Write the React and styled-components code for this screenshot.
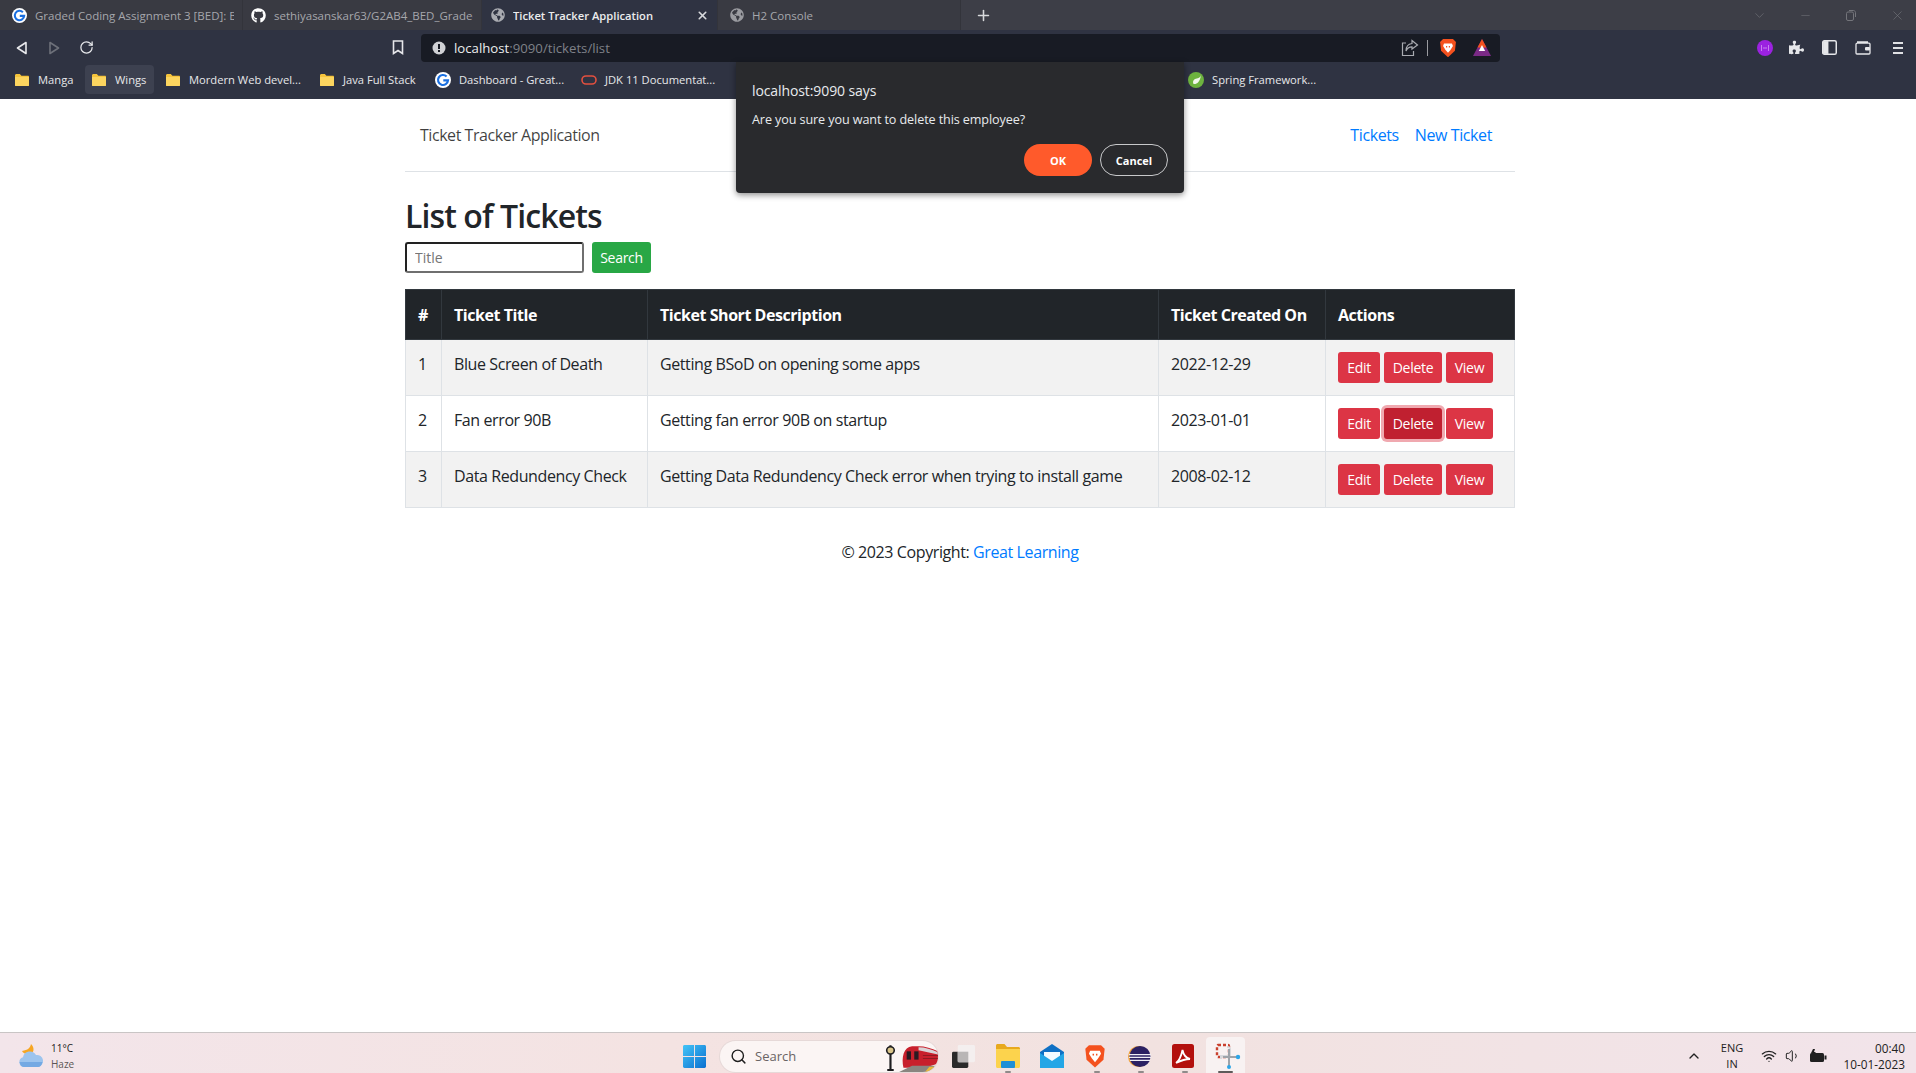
import React from "react"
import styled, { createGlobalStyle } from "styled-components"
import { FaGithub, FaGlobeAmericas, FaPuzzlePiece } from "react-icons/fa"
import { Search as SearchIcon, RotateCw, Plus, X, ChevronDown, ChevronUp, Minus, Wifi, Volume1 } from "lucide-react"

const UI = `"Open Sans", "Noto Sans", sans-serif`

const GlobalStyle = createGlobalStyle`
  html, body { margin: 0; padding: 0; background: #fff; }
  * { box-sizing: border-box; }
  body { font-family: ${UI}; color: #212529; }
`

const tickets = [
  { id: 1, title: "Blue Screen of Death", desc: "Getting BSoD on opening some apps", created: "2022-12-29" },
  { id: 2, title: "Fan error 90B", desc: "Getting fan error 90B on startup", created: "2023-01-01" },
  { id: 3, title: "Data Redundency Check", desc: "Getting Data Redundency Check error when trying to install game", created: "2008-02-12" },
]

const bookmarks = [
  { label: "Manga", icon: "folder", width: 76 },
  { label: "Wings", icon: "folder", width: 69, hover: true },
  { label: "Mordern Web devel...", icon: "folder", width: 151 },
  { label: "Java Full Stack", icon: "folder", width: 113 },
  { label: "Dashboard - Great...", icon: "g", width: 143 },
  { label: "JDK 11 Documentat...", icon: "oracle", width: 150 },
]

function Folder({ size = 16 }) {
  return (
    <svg width={size} height={size} viewBox="0 0 16 16">
      <path d="M1 3.5C1 2.7 1.6 2 2.4 2h3.4l1.6 1.7H14c.6 0 1 .5 1 1V13c0 .6-.5 1-1 1H2c-.6 0-1-.5-1-1z" fill="#f5c33b" />
      <path d="M1 5h14v8c0 .6-.5 1-1 1H2c-.6 0-1-.5-1-1z" fill="#fcd55f" />
    </svg>
  )
}

function GoogleG({ size = 16 }) {
  return (
    <svg width={size} height={size} viewBox="0 0 16 16">
      <circle cx="8" cy="8" r="8" fill="#fff" />
      <path d="M11.6 4.5A5 5 0 1 0 13 8.4H8.3" fill="none" stroke="#1a6fe0" strokeWidth="2.2" />
    </svg>
  )
}

function Oracle() {
  return (
    <svg width="16" height="16" viewBox="0 0 16 16">
      <rect x="1" y="4" width="14" height="8" rx="4" fill="none" stroke="#e2503f" strokeWidth="1.6" />
    </svg>
  )
}

function Spring() {
  return (
    <svg width="16" height="16" viewBox="0 0 16 16">
      <circle cx="8" cy="8" r="8" fill="#6db33f" />
      <path d="M13 3c-1 3.500-3.500 3-6 4-2 1-2.500 3-1.500 5 3 .6 6.500-1.500 7.500-9z" fill="#f2f7ec" />
    </svg>
  )
}

function BackArrow({ dim }) {
  return (
    <svg width="14" height="16" viewBox="0 0 14 16" fill="none" stroke={dim ? "#6d7079" : "#e8e9ec"} strokeWidth="1.6" strokeLinejoin="round">
      {dim ? <path d="M3 2.500 11.500 8 3 13.500z" /> : <path d="M11 2.500 2.500 8 11 13.500z" />}
    </svg>
  )
}

function BookmarkGlyph() {
  return (
    <svg width="12" height="15" viewBox="0 0 12 15" fill="none" stroke="#e6e7ea" strokeWidth="1.6">
      <path d="M1.500 1h9v12.500L6 10.500 1.500 13.500z" />
    </svg>
  )
}

function InfoDot() {
  return (
    <svg width="14" height="14" viewBox="0 0 14 14">
      <circle cx="7" cy="7" r="6.500" fill="#d0d1d5" />
      <rect x="6" y="3" width="2" height="5" fill="#181b24" />
      <rect x="6" y="9" width="2" height="2" fill="#181b24" />
    </svg>
  )
}

function ShareGlyph() {
  return (
    <svg width="18" height="18" viewBox="0 0 18 18" fill="none" stroke="#a9abb1" strokeWidth="1.200">
      <path d="M5 4H1.500v12.500h11V12" />
      <path d="M11 1.500 16.500 6 11 10V7.800C8 7.800 6 9 5 12c0-4 2-7 6-7.500z" />
    </svg>
  )
}

function BraveLion({ size = 18 }) {
  return (
    <svg width={size} height={size * 1.1} viewBox="0 0 18 20">
      <path d="M4 1h10l3 3-1 9-7 6.500L2 13 1 4z" fill="#f4511e" />
      <path d="M5 5.500h8l1 2.500-2.500 4L9 15l-2.500-3L4 8z" fill="#fff" />
      <path d="M7 8h1.200v1.500H7zM9.800 8H11v1.500H9.800z" fill="#f4511e" />
    </svg>
  )
}

function BatTriangle() {
  return (
    <svg width="18" height="17" viewBox="0 0 18 17">
      <path d="M9 0 18 17H0z" fill="#7a2a86" />
      <path d="M9 0 13.500 8.500h-9z" fill="#f4511e" />
      <path d="M9 6l3.200 6H5.800z" fill="#fff" />
    </svg>
  )
}

function ProfileBadge() {
  return (
    <svg width="16" height="16" viewBox="0 0 16 16">
      <circle cx="8" cy="8" r="8" fill="#9b22e0" />
      <path d="M4.500 5.500v5M11.500 5.500v5M6.500 8h3" stroke="#f3dcff" strokeWidth="1" strokeDasharray="1 1" />
    </svg>
  )
}

function SidebarGlyph() {
  return (
    <svg width="15" height="15" viewBox="0 0 14 14">
      <rect x=".7" y=".7" width="12.600" height="12.600" rx="1.500" fill="none" stroke="#e6e7ea" strokeWidth="1.400" />
      <rect x="1" y="1" width="5" height="12" fill="#e6e7ea" />
    </svg>
  )
}

function WalletGlyph() {
  return (
    <svg width="16" height="14" viewBox="0 0 16 14" fill="none" stroke="#e6e7ea" strokeWidth="1.300">
      <path d="M2 1h11M1 3.500C1 2.700 1.600 2.200 2.400 2.200H14c.6 0 1 .4 1 1V12c0 .6-.4 1-1 1H2c-.6 0-1-.4-1-1z" />
      <rect x="10" y="6" width="5" height="3.500" rx="1" fill="#e6e7ea" stroke="none" />
    </svg>
  )
}

function MenuGlyph() {
  return (
    <svg width="10" height="12" viewBox="0 0 10 12">
      <path d="M0 0h10v2H0zM0 5h10v2H0zM0 10h10v2H0z" fill="#e0e1e4" />
    </svg>
  )
}

function RestoreGlyph() {
  return (
    <svg width="10" height="11" viewBox="0 0 10 11" fill="none" stroke="#74757b">
      <rect x=".5" y="2" width="7" height="8.500" rx="1.500" />
      <path d="M3 .5h4.500c1 0 2 1 2 2V7" />
    </svg>
  )
}

function WeatherGlyph() {
  return (
    <svg width="26" height="26" viewBox="0 0 26 26">
      <path d="M13 1c-1 4-3 6-9 7 1 2 4 4 8 3 4-1 5-6 1-10z" fill="#f6a623" />
      <path d="M6 24a5 5 0 0 1-1-9.800A7 7 0 0 1 18 12a5.500 5.500 0 0 1 2 12z" fill="#9cc4ee" />
      <path d="M1.500 19h23c-.5 3-2.500 5-4.500 5H6c-2.500 0-4-2-4.500-5z" fill="#74a9e3" />
    </svg>
  )
}

function WindowsLogo() {
  return (
    <svg width="23" height="23" viewBox="0 0 24 24">
      <defs>
        <linearGradient id="winGrad" x1="0" y1="0" x2="1" y2="1">
          <stop offset="0" stopColor="#43c4f7" />
          <stop offset="1" stopColor="#0a6fd0" />
        </linearGradient>
      </defs>
      <path d="M0 1.500C0 .7.700 0 1.500 0h10v11.500H0zM12.500 0h10c.8 0 1.500.7 1.500 1.500v10H12.500zM0 12.500h11.500V24h-10C.7 24 0 23.300 0 22.500zM12.500 12.500H24v10c0 .8-.7 1.500-1.500 1.500h-10z" fill="url(#winGrad)" />
    </svg>
  )
}

function LampTrain() {
  return (
    <svg width="54" height="31" viewBox="0 0 50 30" preserveAspectRatio="none">
      <path d="M6 4v24" stroke="#1d1d1f" strokeWidth="2" />
      <circle cx="6" cy="9" r="3.500" fill="#d9c58a" stroke="#1d1d1f" strokeWidth="1.500" />
      <path d="M3 28h6" stroke="#1d1d1f" strokeWidth="2" />
      <path d="M18 26c-2-10 0-20 8-21h6c6 0 12 2 18 5v12c-6 2-10 3-14 4z" fill="#c8202c" />
      <path d="M32 6c6 0 12 2 18 5v2L32 9z" fill="#d9d3d6" />
      <rect x="21" y="10" width="4" height="8" fill="#2a1b22" />
      <rect x="28" y="10" width="4" height="8" fill="#2a1b22" />
      <path d="M36 14h14M36 17h14" stroke="#8f1a22" strokeWidth="1" />
      <path d="M14 30l12-6h24v6z" fill="#8a8580" />
      <path d="M38 30l4-5h8v5z" fill="#e8b83a" />
    </svg>
  )
}

function TaskViewGlyph() {
  return (
    <svg width="23" height="23" viewBox="0 0 24 24">
      <rect x="0" y="7" width="17" height="17" rx="1.500" fill="#2a2a2a" />
      <rect x="6" y="0" width="18" height="18" rx="1.500" fill="#f4efef" />
      <rect x="6" y="7" width="11" height="11" fill="#b9b6b6" />
    </svg>
  )
}

function ExplorerGlyph() {
  return (
    <svg width="24" height="24" viewBox="0 0 24 24">
      <path d="M0 1.500C0 .7.700 0 1.500 0h7L11 3h11.500c.8 0 1.500.7 1.500 1.500V8H0z" fill="#e8a91d" />
      <path d="M0 5h24v17.500c0 .8-.7 1.500-1.500 1.500h-21C.7 24 0 23.300 0 22.500z" fill="#fcd34d" />
      <rect x="5" y="17" width="14" height="7" rx="1" fill="#1f8fd6" />
    </svg>
  )
}

function MailGlyph() {
  return (
    <svg width="24" height="24" viewBox="0 0 24 24">
      <path d="M12 0 24 8v16H0V8z" fill="#0f70c4" />
      <path d="M4 8h16v6l-8 5-8-5z" fill="#f4fbff" />
      <path d="M0 9l12 8 12-8v15H0z" fill="#23a6e6" />
    </svg>
  )
}

function EclipseGlyph() {
  return (
    <svg width="23" height="23" viewBox="0 0 24 24">
      <circle cx="11" cy="12" r="11" fill="#f0a23b" />
      <circle cx="12.500" cy="12" r="11" fill="#2b2163" />
      <path d="M1 10h23M1 13h23M2 16h21" stroke="#efeef5" strokeWidth="1.300" />
    </svg>
  )
}

function PdfGlyph() {
  return (
    <svg width="22" height="24" viewBox="0 0 22 24">
      <rect width="22" height="24" rx="2.500" fill="#b3100d" />
      <path d="M4 19c3-2 5-6 6.500-13 1 5 3 8 7.500 9-4 0-8 1-14 4z" fill="none" stroke="#fff" strokeWidth="1.800" />
    </svg>
  )
}

function SnipGlyph() {
  return (
    <svg width="26" height="26" viewBox="0 0 26 26">
      <rect x="2" y="2" width="12" height="12" rx="1" fill="none" stroke="#c9402e" strokeWidth="2.400" strokeDasharray="3 2" />
      <path d="M12 4c3 0 3 1 3 3v6H6v3" fill="none" stroke="#d6d8dc" strokeWidth="2" />
      <path d="M14 6v18M8 14h16" stroke="#9ea4aa" strokeWidth="2" />
      <circle cx="23" cy="14" r="2.200" fill="#2ea6e8" />
      <circle cx="14" cy="24" r="2" fill="#2ea6e8" />
    </svg>
  )
}

function BatteryGlyph() {
  return (
    <svg width="18" height="14" viewBox="0 0 18 14">
      <rect x="1" y="4" width="14" height="9" rx="1.500" fill="#202020" />
      <rect x="15.500" y="6.500" width="2" height="4" fill="#202020" />
      <path d="M4 0 2 4h2L3 7l4-4H5l1-3z" fill="#202020" />
    </svg>
  )
}

const Screen = styled.div`
  position: relative;
  height: 1073px;
  width: 1916px;
  overflow: hidden;
  display: flex;
  flex-direction: column;
`

const TabStrip = styled.div`
  height: 30px;
  background: #3d3e47;
  display: flex;
  align-items: stretch;
  font-family: "Open Sans", sans-serif;
`

const Tab = styled.div`
  width: ${(p) => p.$width}px;
  padding: 0 8px 0 ${(p) => p.$pad}px;
  background: ${(p) => (p.$active ? "#2f3342" : "#393a42")};
  color: ${(p) => (p.$active ? "#eceded" : "#a6a7ac")};
  font-size: ${(p) => (p.$active ? 11.2 : 11.5)}px;
  font-weight: ${(p) => (p.$active ? 600 : 400)};
  display: flex;
  align-items: center;
  gap: 8px;
  border-right: 1px solid #33343b;
  flex-shrink: 0;
`

const TabTitle = styled.span`
  flex: 1;
  overflow: hidden;
  white-space: nowrap;
`

const NewTab = styled.div`
  width: 44px;
  display: flex;
  align-items: center;
  justify-content: center;
  color: #d8d9dc;
`

const WindowControls = styled.div`
  margin-left: auto;
  margin-right: -4px;
  display: flex;
  align-items: center;
`

const WindowButton = styled.div`
  width: 46px;
  display: flex;
  justify-content: center;
  color: #74757b;
`

const Toolbar = styled.div`
  height: 35px;
  background: #2f3342;
  display: flex;
  align-items: center;
`

const NavButtons = styled.div`
  width: 421px;
  display: flex;
  align-items: center;
  padding-left: 15px;
`

const NavIcon = styled.div`
  width: 32px;
  display: flex;
  justify-content: flex-start;
  color: #e8e9ec;
`

const BookmarkSlot = styled.div`
  margin-left: auto;
  padding-right: 17px;
  display: flex;
`

const AddressBar = styled.div`
  width: 1079px;
  height: 28px;
  border-radius: 4px;
  background: #181b24;
  display: flex;
  align-items: center;
  padding: 0 9px 0 11px;
  font-size: 13.2px;
  font-family: "Open Sans", sans-serif;
`

const Url = styled.span`
  margin-left: 8px;
  color: #7f8188;
  flex: 1;
  b {
    font-weight: 400;
    color: #eceded;
  }
`

const BarDivider = styled.div`
  width: 1px;
  height: 16px;
  background: #9a9ba0;
  margin: 0 11px 0 8px;
`

const BatSlot = styled.div`
  margin-left: 16px;
  display: flex;
`

const ToolbarRight = styled.div`
  flex: 1;
  display: flex;
  align-items: center;
  justify-content: flex-end;
  gap: 18px;
  padding-right: 13px;
  color: #e6e7ea;
`

const BadgeSlot = styled.div`
  display: flex;
  margin-right: -2px;
`

const MenuSlot = styled.div`
  display: flex;
  margin-left: 4px;
`

const BookmarksBar = styled.div`
  height: 34px;
  background: #2f3342;
  display: flex;
  align-items: center;
  gap: 3px;
  padding: 0 0 5px 6px;
  font-family: "Open Sans", sans-serif;
`

const BookmarkItem = styled.div`
  width: ${(p) => p.$width}px;
  height: 29px;
  padding-left: ${(p) => (p.$hover ? 6 : 8)}px;
  border-radius: 4px;
  display: flex;
  align-items: center;
  gap: 8px;
  color: #e7e8ea;
  font-size: 11.2px;
  white-space: nowrap;
  overflow: hidden;
  flex-shrink: 0;
  background: ${(p) => (p.$hover ? "#3d4150" : "transparent")};
`

const BookmarkGap = styled.div`
  width: 451px;
  flex-shrink: 0;
`

const Page = styled.main`
  flex: 1;
  background: #fff;
  padding-left: 4px;
`

const Container = styled.div`
  width: 1110px;
  margin: 0 auto;
`

const Navbar = styled.nav`
  height: 73px;
  border-bottom: 1px solid #dee2e6;
  display: flex;
  align-items: center;
  justify-content: space-between;
  padding: 0 23px 0 15px;
  font-size: 16px;
`

const Brand = styled.span`
  color: rgba(0, 0, 0, 0.75);
  letter-spacing: -0.45px;
`

const NavLinks = styled.div`
  display: flex;
  gap: 16px;
`

const Link = styled.a`
  color: #007bff;
  text-decoration: none;
  letter-spacing: -0.4px;
`

const Heading = styled.h2`
  margin: 25px 0 7px;
  font-size: 32px;
  line-height: 38px;
  font-weight: 600;
  letter-spacing: -0.9px;
`

const SearchForm = styled.form`
  display: flex;
  gap: 8px;
  margin-bottom: 16px;
`

const TitleInput = styled.input`
  width: 179px;
  height: 31px;
  border: 2px solid #222;
  border-right-color: #6f6f6f;
  border-bottom-color: #6f6f6f;
  border-radius: 3px;
  padding: 0 8px;
  font: 14px ${UI};
  outline: none;
  &::placeholder {
    color: #757575;
  }
`

const Button = styled.button`
  height: 31px;
  width: ${(p) => p.$width}px;
  padding: 0;
  border: 0;
  border-radius: 3px;
  background: ${(p) => (p.$focused ? "#c02030" : p.$bg || "#dc3545")};
  color: #fff;
  font: 14px ${UI};
  letter-spacing: -0.3px;
  flex-shrink: 0;
  box-shadow: ${(p) => (p.$focused ? "0 0 0 3px rgba(225, 83, 97, 0.5)" : "none")};
`

const Table = styled.table`
  width: 1109px;
  table-layout: fixed;
  border-collapse: collapse;
  font-size: 16px;
`

const Th = styled.th`
  background: #212529;
  color: #fff;
  border: 1px solid #32383e;
  padding: 12px;
  height: 50px;
  text-align: left;
  font-weight: 700;
  letter-spacing: -0.45px;
  white-space: nowrap;
`

const Row = styled.tr`
  background: ${(p) => (p.$striped ? "#f2f2f2" : "#fff")};
`

const Td = styled.td`
  border: 1px solid #dee2e6;
  padding: 12px;
  height: 56px;
  vertical-align: top;
  line-height: 24px;
  letter-spacing: -0.4px;
  white-space: nowrap;
`

const Actions = styled.div`
  display: flex;
  gap: 4px;
`

const Footer = styled.footer`
  margin-top: 24px;
  text-align: center;
  font-size: 16px;
  line-height: 24px;
  padding-top: 8px;
  letter-spacing: -0.4px;
`

const Dialog = styled.div`
  position: absolute;
  left: 736px;
  top: 62px;
  width: 448px;
  height: 131px;
  background: #292a2d;
  border-radius: 0 0 4px 4px;
  box-shadow: 0 2px 6px rgba(0, 0, 0, 0.45);
  padding: 19px 16px 17px;
  color: #e8eaed;
  font-family: "Open Sans", sans-serif;
  display: flex;
  flex-direction: column;
`

const DialogTitle = styled.div`
  font-size: 14px;
  line-height: 20px;
  letter-spacing: -0.1px;
`

const DialogMessage = styled.div`
  font-size: 12.6px;
  line-height: 18px;
  margin-top: 10px;
  letter-spacing: -0.1px;
`

const DialogActions = styled.div`
  margin-top: auto;
  display: flex;
  justify-content: flex-end;
  gap: 8px;
`

const DialogButton = styled.button`
  width: 68px;
  height: 32px;
  border-radius: 16px;
  font: 700 11px "Open Sans", sans-serif;
  color: #fff;
  background: ${(p) => (p.$primary ? "#ff5a2b" : "transparent")};
  border: ${(p) => (p.$primary ? "0" : "1px solid #c7c8ca")};
`

const Taskbar = styled.div`
  height: 41px;
  background: linear-gradient(90deg, #f3e5ea 0%, #f4e3e2 35%, #f2e2e0 60%, #f2e4ea 100%);
  border-top: 1px solid #c9c5c5;
  padding-top: 6px;
  display: flex;
  align-items: center;
  font-family: "Open Sans", sans-serif;
`

const Weather = styled.div`
  width: 683px;
  padding-left: 18px;
  display: flex;
  align-items: center;
  gap: 7px;
  flex-shrink: 0;
`

const WeatherText = styled.div`
  font-size: 10px;
  line-height: 16px;
  color: #1c1c1c;
  span {
    display: block;
    color: #5c5656;
  }
`

const StartSlot = styled.div`
  width: 37px;
  display: flex;
  flex-shrink: 0;
`

const SearchPill = styled.div`
  width: 218px;
  height: 31px;
  border-radius: 16px;
  background: #fbf5f4;
  box-shadow: 0 0 0 1px #e6d9d8;
  display: flex;
  align-items: center;
  padding-left: 10px;
  color: #6a6464;
  font-size: 13px;
  gap: 8px;
  overflow: hidden;
  flex-shrink: 0;
`

const PillLabel = styled.span`
  flex: 1;
`

const TaskIcons = styled.div`
  display: flex;
  align-items: flex-end;
  align-self: flex-end;
  padding-left: 4px;
  flex-shrink: 0;
`

const TaskIcon = styled.div`
  position: relative;
  width: ${(p) => (p.$active ? 39 : 44.2)}px;
  height: 36px;
  margin-left: ${(p) => (p.$active ? -1 : 0)}px;
  padding: 2px 0 0 ${(p) => (p.$active ? 9 : 9.5)}px;
  display: flex;
  align-items: center;
  border-radius: 4px 4px 0 0;
  background: ${(p) => (p.$active ? "#f8f2f2" : "transparent")};
  flex-shrink: 0;
  &::after {
    content: "";
    display: ${(p) => (p.$running ? "block" : "none")};
    position: absolute;
    bottom: 0;
    left: ${(p) => (p.$active ? 12 : 19)}px;
    width: ${(p) => (p.$active ? 15 : 6)}px;
    height: 2px;
    border-radius: 1px;
    background: ${(p) => (p.$active ? "#5e5a5a" : "#8f8a8a")};
  }
`

const Tray = styled.div`
  margin-left: auto;
  display: flex;
  align-items: center;
  padding-right: 11px;
  color: #222;
`

const Lang = styled.div`
  width: 30px;
  text-align: center;
  font-size: 11px;
  line-height: 16px;
  margin: 0 14px 0 15px;
`

const TrayIcons = styled.div`
  display: flex;
  align-items: center;
  gap: 8px;
`

const Clock = styled.div`
  width: 72px;
  margin-left: 6px;
  text-align: right;
  font-size: 11.8px;
  line-height: 16px;
`

function App() {
  return (
    <Screen>
      <GlobalStyle />
      <TabStrip>
        <Tab $width={243} $pad={12}>
          <GoogleG size={15} />
          <TabTitle>Graded Coding Assignment 3 [BED]: Ba</TabTitle>
        </Tab>
        <Tab $width={239} $pad={8}>
          <FaGithub size={15} color="#fff" />
          <TabTitle>sethiyasanskar63/G2AB4_BED_Graded</TabTitle>
        </Tab>
        <Tab $width={236} $pad={9} $active>
          <FaGlobeAmericas size={14} color="#a9abb1" />
          <TabTitle>Ticket Tracker Application</TabTitle>
          <X size={13} strokeWidth={3} color="#d8d9dc" />
        </Tab>
        <Tab $width={243} $pad={12}>
          <FaGlobeAmericas size={14} color="#9a9ba0" />
          <TabTitle>H2 Console</TabTitle>
        </Tab>
        <NewTab>
          <Plus size={17} strokeWidth={2.2} />
        </NewTab>
        <WindowControls>
          <WindowButton>
            <ChevronDown size={15} strokeWidth={1} />
          </WindowButton>
          <WindowButton>
            <Minus size={13} strokeWidth={1} />
          </WindowButton>
          <WindowButton>
            <RestoreGlyph />
          </WindowButton>
          <WindowButton>
            <X size={15} strokeWidth={1} />
          </WindowButton>
        </WindowControls>
      </TabStrip>

      <Toolbar>
        <NavButtons>
          <NavIcon>
            <BackArrow />
          </NavIcon>
          <NavIcon>
            <BackArrow dim />
          </NavIcon>
          <NavIcon>
            <RotateCw size={15} strokeWidth={2} />
          </NavIcon>
          <BookmarkSlot>
            <BookmarkGlyph />
          </BookmarkSlot>
        </NavButtons>
        <AddressBar>
          <InfoDot />
          <Url>
            <b>localhost</b>:9090/tickets/list
          </Url>
          <ShareGlyph />
          <BarDivider />
          <BraveLion />
          <BatSlot>
            <BatTriangle />
          </BatSlot>
        </AddressBar>
        <ToolbarRight>
          <BadgeSlot>
            <ProfileBadge />
          </BadgeSlot>
          <FaPuzzlePiece size={15} />
          <SidebarGlyph />
          <WalletGlyph />
          <MenuSlot>
            <MenuGlyph />
          </MenuSlot>
        </ToolbarRight>
      </Toolbar>

      <BookmarksBar>
        {bookmarks.map((b) => (
          <BookmarkItem key={b.label} $width={b.width} $hover={b.hover}>
            {b.icon === "folder" && <Folder />}
            {b.icon === "g" && <GoogleG />}
            {b.icon === "oracle" && <Oracle />}
            {b.label}
          </BookmarkItem>
        ))}
        <BookmarkGap />
        <BookmarkItem $width={140}>
          <Spring />
          Spring Framework...
        </BookmarkItem>
      </BookmarksBar>

      <Page>
        <Container>
          <Navbar>
            <Brand>Ticket Tracker Application</Brand>
            <NavLinks>
              <Link href="#tickets">Tickets</Link>
              <Link href="#new">New Ticket</Link>
            </NavLinks>
          </Navbar>
          <Heading>List of Tickets</Heading>
          <SearchForm>
            <TitleInput placeholder="Title" />
            <Button type="button" $bg="#28a745" $width={59}>
              Search
            </Button>
          </SearchForm>
          <Table>
            <colgroup>
              <col width="36" />
              <col width="206" />
              <col width="511" />
              <col width="167" />
              <col width="189" />
            </colgroup>
            <thead>
              <tr>
                <Th>#</Th>
                <Th>Ticket Title</Th>
                <Th>Ticket Short Description</Th>
                <Th>Ticket Created On</Th>
                <Th>Actions</Th>
              </tr>
            </thead>
            <tbody>
              {tickets.map((t, i) => (
                <Row key={t.id} $striped={i % 2 === 0}>
                  <Td>{t.id}</Td>
                  <Td>{t.title}</Td>
                  <Td>{t.desc}</Td>
                  <Td>{t.created}</Td>
                  <Td>
                    <Actions>
                      <Button type="button" $width={42}>Edit</Button>
                      <Button type="button" $width={58} $focused={t.id === 2}>Delete</Button>
                      <Button type="button" $width={47}>View</Button>
                    </Actions>
                  </Td>
                </Row>
              ))}
            </tbody>
          </Table>
          <Footer>
            © 2023 Copyright: <Link href="#gl">Great Learning</Link>
          </Footer>
        </Container>
      </Page>

      <Taskbar>
        <Weather>
          <WeatherGlyph />
          <WeatherText>
            11°C
            <span>Haze</span>
          </WeatherText>
        </Weather>
        <StartSlot>
          <WindowsLogo />
        </StartSlot>
        <SearchPill>
          <SearchIcon size={17} color="#1f1f1f" strokeWidth={2} />
          <PillLabel>Search</PillLabel>
          <LampTrain />
        </SearchPill>
        <TaskIcons>
          <TaskIcon><TaskViewGlyph /></TaskIcon>
          <TaskIcon $running><ExplorerGlyph /></TaskIcon>
          <TaskIcon><MailGlyph /></TaskIcon>
          <TaskIcon $running><BraveLion size={22} /></TaskIcon>
          <TaskIcon $running><EclipseGlyph /></TaskIcon>
          <TaskIcon $running><PdfGlyph /></TaskIcon>
          <TaskIcon $active $running><SnipGlyph /></TaskIcon>
        </TaskIcons>
        <Tray>
          <ChevronUp size={16} strokeWidth={2} />
          <Lang>
            ENG
            <br />
            IN
          </Lang>
          <TrayIcons>
            <Wifi size={16} />
            <Volume1 size={16} strokeWidth={1.5} />
            <BatteryGlyph />
          </TrayIcons>
          <Clock>
            00:40
            <br />
            10-01-2023
          </Clock>
        </Tray>
      </Taskbar>

      <Dialog>
        <DialogTitle>localhost:9090 says</DialogTitle>
        <DialogMessage>Are you sure you want to delete this employee?</DialogMessage>
        <DialogActions>
          <DialogButton $primary>OK</DialogButton>
          <DialogButton>Cancel</DialogButton>
        </DialogActions>
      </Dialog>
    </Screen>
  )
}

export default App
